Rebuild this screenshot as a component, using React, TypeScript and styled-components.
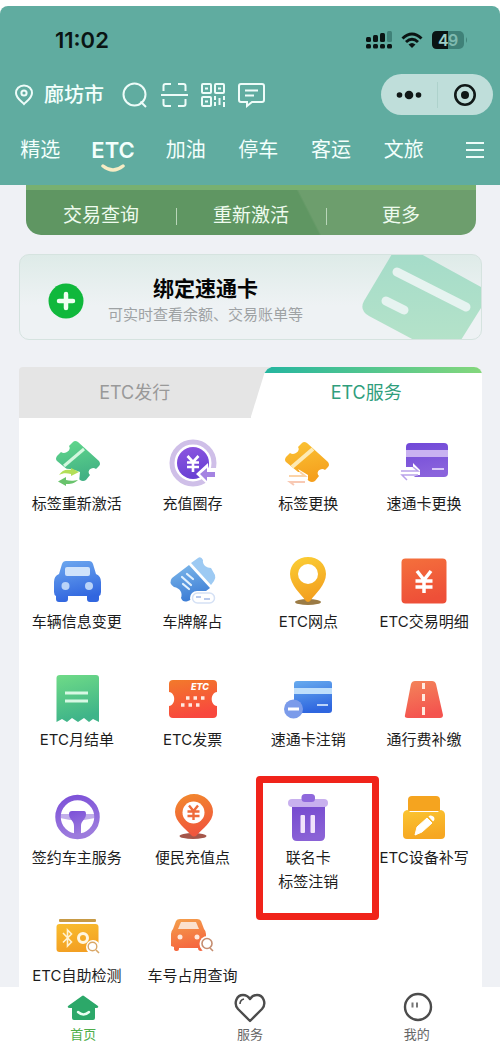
import React from "react";
import styled, { createGlobalStyle, css } from "styled-components";

const GlobalStyle = createGlobalStyle`
  *, *::before, *::after { box-sizing: border-box; }
  body {
    margin: 0;
    background: #ffffff;
    font-family: Inter, "Noto Sans CJK SC", sans-serif;
    color: #1c1c1c;
  }
  button { font: inherit; color: inherit; background: none; border: 0; padding: 0; margin: 0; cursor: pointer; }
  a { color: inherit; text-decoration: none; }
  h2, p { margin: 0; font-weight: 400; }
  svg { display: block; flex: none; }
`;

const Page = styled.div`
  display: flex;
  flex-direction: column;
  min-height: 100vh;
  padding-top: 6px;
`;

const Header = styled.header`
  background: #60aca0;
  border-radius: 8px 8px 0 0;
  color: #f3fffc;
`;

const StatusBar = styled.div`
  display: flex;
  align-items: center;
  justify-content: space-between;
  height: 68px;
  padding: 0 32px 0 55px;
  color: #0a1413;
`;

const Clock = styled.time`
  font-size: 22px;
  line-height: 24px;
  font-weight: 600;
`;

const StatusIcons = styled.div`
  display: flex;
  align-items: center;
  gap: 9px;
`;

const ToolRow = styled.div`
  display: flex;
  align-items: center;
  height: 41px;
  padding: 0 7px 0 14px;
`;

const CityButton = styled.button`
  display: flex;
  align-items: center;
  gap: 10px;
  margin-right: 18px;
  font-size: 20px;
  line-height: 24px;
  font-weight: 500;
`;

const Tools = styled.div`
  display: flex;
  align-items: center;
  gap: 13px;
`;

const Capsule = styled.div`
  display: flex;
  align-items: center;
  width: 112px;
  height: 41px;
  margin-left: auto;
  border-radius: 21px;
  background: #bfdeda;
`;

const CapsuleButton = styled.button`
  display: flex;
  flex: 1;
  align-items: center;
  justify-content: center;
  height: 26px;
  & + & { border-left: 1px solid #aed2cc; }
`;

const TopTabs = styled.nav`
  display: flex;
  align-items: center;
  height: 70px;
  padding: 0 16px 0 4px;
`;

const TopTab = styled.a<{ $active?: boolean }>`
  position: relative;
  display: flex;
  flex: 1;
  justify-content: center;
  font-size: 20px;
  line-height: 28px;
  ${(p) => p.$active && css`
    font-size: 22px;
    font-weight: 600;
  `}
`;

const TabSmile = styled.svg`
  position: absolute;
  top: 28px;
  left: 50%;
  margin-left: -13px;
`;

const MenuButton = styled.button`
  display: flex;
  justify-content: flex-end;
  width: 44px;
`;

const Content = styled.main`
  flex: 1;
  padding: 0 18px 0 19px;
  background: #eff1f5;
`;

const QuickBar = styled.div`
  display: flex;
  align-items: center;
  height: 50px;
  margin: 0 6px 0 7px;
  padding-top: 6px;
  border-top: 5px solid #78b070;
  border-radius: 0 0 15px 15px;
  background: linear-gradient(63deg, #5f9662 0 62%, #6d9e6d 62.5% 100%);
  color: #eefbee;
`;

const QuickLink = styled.a`
  flex: 1;
  position: relative;
  text-align: center;
  font-size: 19px;
  line-height: 24px;
  & + &::before {
    content: "";
    position: absolute;
    left: 0;
    top: 4px;
    height: 17px;
    border-left: 1px solid #b9d6b9;
  }
`;

const BindCard = styled.a`
  display: flex;
  align-items: center;
  height: 86px;
  margin-top: 19px;
  padding-left: 28px;
  overflow: hidden;
  border: 1px solid #d5e3df;
  border-radius: 10px;
  background: linear-gradient(#deebe8, #eef2f4 60%);
`;

const BindBody = styled.div`
  display: flex;
  flex: 1;
  align-items: center;
  padding-top: 8px;
`;

const BindText = styled.div`
  width: 203px;
  margin-left: 20px;
  text-align: center;
  white-space: nowrap;
`;

const BindTitle = styled.h2`
  font-size: 21px;
  line-height: 28px;
  font-weight: 700;
  color: #050505;
`;

const BindHint = styled.p`
  font-size: 15px;
  line-height: 24px;
  color: #9ea2a4;
`;

const PanelTabs = styled.div`
  display: flex;
  height: 51px;
  margin-top: 27px;
  border-radius: 4px 8px 0 0;
  background: #e5e5e5;
  overflow: hidden;
`;

const PanelTab = styled.button<{ $active?: boolean }>`
  flex: 1;
  font-size: 18px;
  line-height: 24px;
  color: #999999;
  ${(p) => p.$active && css`
    color: #2f9e7c;
    background: linear-gradient(90deg, #1fb3a2, #84d77c) top / 100% 6px no-repeat, #ffffff;
    clip-path: polygon(0 100%, 14px 6px, 17px 2px, 21px 0, 100% 0, 100% 100%);
  `}
`;

const ServiceGrid = styled.div`
  display: grid;
  grid-template-columns: repeat(4, 1fr);
  grid-auto-rows: 76px;
  row-gap: 42px;
  padding-top: 21px;
  background: #ffffff;
`;

const Service = styled.a<{ $marked?: boolean }>`
  position: relative;
  display: flex;
  flex-direction: column;
  align-items: center;
  gap: 5px;
  font-size: 15px;
  line-height: 24px;
  text-align: center;
  white-space: pre;
  ${(p) => p.$marked && css`
    z-index: 1;
    &::after {
      content: "";
      position: absolute;
      top: -17px;
      left: 5px;
      width: 123px;
      height: 144px;
      border: 7px solid #f0231a;
      border-radius: 4px;
    }
  `}
`;

const BottomNav = styled.nav`
  display: flex;
  height: 68px;
  padding-top: 5px;
  background: #ffffff;
`;

const NavItem = styled.a<{ $active?: boolean }>`
  display: flex;
  flex: 1;
  flex-direction: column;
  align-items: center;
  font-size: 13px;
  line-height: 20px;
  color: ${(p) => (p.$active ? "#4fae4a" : "#666666")};
`;

const Icon = ({ children }: { children: React.ReactNode }) => (
  <svg width="48" height="48" viewBox="0 0 48 48" fill="none" overflow="visible" aria-hidden="true">
    {children}
  </svg>
);

const Fade = ({ id, from, to }: { id: string; from: string; to: string }) => (
  <defs>
    <linearGradient id={id} x1="0" y1="0" x2="0.25" y2="1">
      <stop offset="0" stopColor={from} />
      <stop offset="1" stopColor={to} />
    </linearGradient>
  </defs>
);

const ticketPath =
  "M20 3Q22 1 25 3L46 22Q48 25 46 27L43 30C39 27 33 32 37 36L33 41Q30 43 27 41L4 22Q2 20 4 17L8 13C12 16 19 11 16 7Z";

const TicketActivate = () => (
  <Icon>
    <Fade id="ta" from="#62d98c" to="#42b184" />
    <path d={ticketPath} fill="url(#ta)" />
    <path d="M31 10L11 27" stroke="#d3f7de" strokeWidth="3" />
    <path d="M3 37C4 28 16 28 27 33L26 43L14 48H4Z" fill="#fff" />
    <path d="M6 36C9 31 13 30 18 31V29L26 33L18 37V35C13 34 10 34 6 36Z" fill="#b3df58" />
    <path d="M25 41C21 45 17 45 13 45V47L5 42.500L13 38V41C17 42 20 42 25 41Z" fill="#69c36c" />
  </Icon>
);

const TicketSwap = () => (
  <Icon>
    <Fade id="ts" from="#fbc435" to="#f5a01e" />
    <path d={ticketPath} fill="url(#ts)" transform="translate(-2 1)" />
    <path d="M29 10L8 28" stroke="#fdeab4" strokeWidth="4" />
    <path d="M2 33H16L14 30L24 36V40L20 47H2Z" fill="#fff" />
    <path d="M5 37H21L16 33" stroke="#fbd3a8" strokeWidth="2" />
    <path d="M21 43H6L10 46" stroke="#f8c9b4" strokeWidth="2" />
  </Icon>
);

const CoinLoad = () => (
  <Icon>
    <Fade id="cl" from="#8d55e0" to="#6a41d4" />
    <circle cx="24" cy="24" r="21" stroke="#cfbfe8" strokeWidth="5" />
    <circle cx="24" cy="24" r="16" fill="url(#cl)" />
    <path d="M18.500 17L24 23L29.500 17M24 23V33M18 23.500H30M18 28H30" stroke="#fff" strokeWidth="2.600" />
    <path d="M27 35L39 24V29H49V43H39V46Z" fill="#fff" />
    <path d="M31 35L38 29V33H46V38H38V42Z" fill="#a483e2" />
  </Icon>
);

const CardSwap = () => (
  <Icon>
    <Fade id="cs" from="#7048d8" to="#8a63dc" />
    <rect x="6" y="4" width="42" height="34" rx="4" fill="url(#cs)" />
    <rect x="6" y="11" width="42" height="7" fill="#c9b2f1" />
    <path d="M32 30H44" stroke="#d9c9f7" strokeWidth="2" />
    <path d="M0 28H13V24L20 31V36H17L12 39L5 38H0Z" fill="#fff" />
    <path d="M1 32H18L13 28M18 36H2L7 41" stroke="#b9a2ea" strokeWidth="1.500" />
  </Icon>
);

const CarBlue = () => (
  <Icon>
    <Fade id="cb" from="#6ea9ef" to="#3166df" />
    <path d="M13 4H36Q39 4 40 7L43 17Q48 19 48 25V35Q48 38 46 39V42Q46 45 43 45H37Q34 45 34 42V39H15V42Q15 45 12 45H6Q3 45 3 42V39Q1 38 1 35V25Q1 19 6 17L9 7Q10 4 13 4Z" fill="url(#cb)" />
    <rect x="12" y="10" width="25" height="9" rx="2" fill="#cfe3fb" />
    <circle cx="12.500" cy="29" r="4" fill="#b9d3f8" />
    <circle cx="36" cy="29" r="4" fill="#b9d3f8" />
  </Icon>
);

const PlateTicket = () => (
  <Icon>
    <Fade id="pt" from="#7db8ea" to="#3f7fd6" />
    <path d="M20 8L41 31L33 37Q28 37 26 41L19 44Q14 46 12 41C14 36 11 31 5 30Q-1 26 3 21Z" fill="url(#pt)" />
    <path d="M22 6L29 1Q32 -1 34 3C33 8 38 11 42 11L46 18Q47 21 45 24L42 28Z" fill="#9dcaf3" />
    <path d="M18 17L24 22M13 20L22 28M14 27L20 32" stroke="#e2f1fd" strokeWidth="2.200" strokeLinecap="round" />
    <rect x="21" y="34" width="27" height="14" rx="7" fill="#fff" />
    <rect x="23.500" y="36" width="22" height="10" rx="5" stroke="#d5e1f5" strokeWidth="1.500" />
    <path d="M27 40H32M35 42H41" stroke="#b8c9ec" strokeWidth="2" />
  </Icon>
);

const PinYellow = () => (
  <Icon>
    <Fade id="py" from="#fbcf35" to="#f3a01f" />
    <ellipse cx="24" cy="45" rx="13" ry="3" fill="#9b7b45" />
    <path d="M24 0C34 0 42 7 42 17C42 28 31 37 27 43Q24 47 21 43C17 37 6 28 6 17C6 7 14 0 24 0Z" fill="url(#py)" />
    <circle cx="24" cy="17" r="10" fill="#fff" />
  </Icon>
);

const YuanSquare = () => (
  <Icon>
    <Fade id="ys" from="#f4703c" to="#ee4f38" />
    <rect x="1.500" y="1.500" width="45" height="45" rx="4" fill="url(#ys)" />
    <path d="M17 14L24 23L31 14M24 23V36M15.500 24H32.500M15.500 30H32.500" stroke="#fff" strokeWidth="3.500" />
  </Icon>
);

const Receipt = () => (
  <Icon>
    <Fade id="rc" from="#6fdb87" to="#3fb489" />
    <path d="M7 0H43Q46 0 46 3V47L40 44L36 47L31 43L25 47L19 43L14 47L9 44L3.500 47V3Q3.500 0 7 0Z" fill="url(#rc)" />
    <path d="M12 18H35M12 26H35" stroke="#d8f8e4" strokeWidth="3" />
  </Icon>
);

const Invoice = () => (
  <Icon>
    <Fade id="iv" from="#f27a2b" to="#f8483e" />
    <path d="M4 5H44Q48 5 48 9V17C41 18 41 30 48 31V39Q48 43 44 43H4Q0 43 0 39V31C7 30 7 18 0 17V9Q0 5 4 5Z" fill="url(#iv)" />
    <text x="22" y="15" fontSize="9" fontWeight="800" fontStyle="italic" fill="#fff">ETC</text>
    <path d="M17 23H20.500M24.500 23H28M32 23H35.500M12 30H15.500M19.500 30H23M27 30H30.500" stroke="#ffe9df" strokeWidth="3.500" />
  </Icon>
);

const CardCancel = () => (
  <Icon>
    <Fade id="cc" from="#67abee" to="#2f66df" />
    <rect x="10" y="6" width="38" height="32" rx="3" fill="url(#cc)" />
    <rect x="10" y="13" width="38" height="6" fill="#bfdffb" />
    <path d="M33 30H44" stroke="#bcd4fa" strokeWidth="2" />
    <circle cx="9.500" cy="34" r="9.500" fill="#7b9bea" />
    <path d="M4 34H15" stroke="#fff" strokeWidth="3" />
  </Icon>
);

const Road = () => (
  <Icon>
    <Fade id="rd" from="#f3855a" to="#f4544f" />
    <path d="M15 6H32Q35 6 36 9L43 40Q43 43 40 43H8Q4 43 5 40L11 9Q12 6 15 6Z" fill="url(#rd)" />
    <path d="M23.500 8V14M23.500 19V26M23.500 32V40" stroke="#ffeadf" strokeWidth="3" />
  </Icon>
);

const Wheel = () => (
  <Icon>
    <Fade id="wh" from="#7c50d8" to="#9c7bdd" />
    <path d="M7 21H42V25L31 27H17L7 25Z" fill="#c2aeea" />
    <path d="M16 21Q16 18 19 18H31Q33 18 33 21C33 27 28 27 28 33V44H21V33C21 27 16 27 16 21Z" fill="url(#wh)" />
    <circle cx="24.500" cy="24" r="19.500" stroke="url(#wh)" strokeWidth="5.500" />
  </Icon>
);

const PinYuan = () => (
  <Icon>
    <Fade id="pn" from="#f28b2c" to="#f0563d" />
    <ellipse cx="24" cy="43" rx="13.500" ry="3" fill="#a5564a" />
    <path d="M25 1C35 1 44 9 44 19C44 29 33 36 28 42Q25 45 22 42C17 36 6 29 6 19C6 9 15 1 25 1Z" fill="url(#pn)" />
    <circle cx="24.500" cy="19.500" r="11" fill="#fff" />
    <path d="M20 12.500L24.500 18L29 12.500M24.500 18V27M18.500 18.500H30.500M18.500 23H30.500" stroke="#ee6c3b" strokeWidth="2.400" />
  </Icon>
);

const Trash = () => (
  <Icon>
    <Fade id="tr" from="#7549cf" to="#8a62d6" />
    <path d="M8 12H41V43Q41 48 36 48H13Q8 48 8 43Z" fill="url(#tr)" />
    <rect x="4" y="6" width="40" height="8" rx="4" fill="#c8b0ee" />
    <rect x="17.500" y="1" width="13.500" height="8" rx="3.500" fill="#8f68dc" />
    <rect x="16.500" y="22" width="4.500" height="18" rx="1" fill="#f1e3fb" />
    <rect x="26.500" y="22" width="4.500" height="18" rx="1" fill="#f1e3fb" />
  </Icon>
);

const DeviceWrite = () => (
  <Icon>
    <Fade id="dw" from="#fbc531" to="#f6a722" />
    <path d="M12 3H36Q40 3 40 7V18H8V7Q8 3 12 3Z" fill="#f5a41f" />
    <path d="M7 17Q9 17 10 19H38Q39 17 41 17Q45 18 45 22V42Q45 46 41 46H7Q3 46 3 42V22Q3 18 7 17Z" fill="url(#dw)" />
    <path d="M15 42L17 34L27 25L32 30L22 39Z" fill="#fff" stroke="#fff" strokeWidth="1" strokeLinejoin="round" />
    <path d="M28.500 23.500L30 22.500Q32 22 34 24Q35 26 34 27.500L33 28.500Z" fill="#fff" />
  </Icon>
);

const DeviceCheck = () => (
  <Icon>
    <Fade id="dc" from="#f9bd2e" to="#f3a023" />
    <rect x="6" y="8" width="37" height="3" rx="1" fill="#c79a45" />
    <rect x="3.500" y="13" width="42" height="28" rx="3" fill="url(#dc)" />
    <path d="M10 22L18.500 31L14.500 35V19L18.500 23L10 31.500" stroke="#fff2d2" strokeWidth="1.600" />
    <circle cx="30" cy="27" r="4.500" stroke="#fff6e0" strokeWidth="3" />
    <circle cx="40" cy="36" r="7" fill="#fff" />
    <circle cx="39.500" cy="35.500" r="4.300" stroke="#d9a767" strokeWidth="1.400" />
    <path d="M43 39L46 42" stroke="#d9a767" strokeWidth="1.600" />
  </Icon>
);

const CarSearch = () => (
  <Icon>
    <Fade id="cq" from="#f4a04c" to="#f5663f" />
    <path d="M11 8H28Q31 8 32 10L35 18Q37 20 37 23V36H34V38Q34 40 32 40Q29 40 29 37H10V38Q10 40 8 40Q5 40 5 38V36L2 35V23Q2 20 4 18L7 10Q8 8 11 8Z" fill="url(#cq)" />
    <path d="M12 11H27L30 18H9Z" fill="#fbe1cf" />
    <circle cx="11" cy="26" r="2.500" fill="#ffe8dc" />
    <circle cx="28" cy="26" r="2.500" fill="#ffe8dc" />
    <circle cx="38.500" cy="33" r="8" fill="#fff" />
    <circle cx="38" cy="32.500" r="5" stroke="#c58d70" strokeWidth="1.600" />
    <path d="M41 37L44 40" stroke="#c58d70" strokeWidth="1.600" />
  </Icon>
);

const services: { label: string; icon: React.ReactNode; marked?: boolean }[] = [
  { label: "标签重新激活", icon: <TicketActivate /> },
  { label: "充值圈存", icon: <CoinLoad /> },
  { label: "标签更换", icon: <TicketSwap /> },
  { label: "速通卡更换", icon: <CardSwap /> },
  { label: "车辆信息变更", icon: <CarBlue /> },
  { label: "车牌解占", icon: <PlateTicket /> },
  { label: "ETC网点", icon: <PinYellow /> },
  { label: "ETC交易明细", icon: <YuanSquare /> },
  { label: "ETC月结单", icon: <Receipt /> },
  { label: "ETC发票", icon: <Invoice /> },
  { label: "速通卡注销", icon: <CardCancel /> },
  { label: "通行费补缴", icon: <Road /> },
  { label: "签约车主服务", icon: <Wheel /> },
  { label: "便民充值点", icon: <PinYuan /> },
  { label: "联名卡\n标签注销", icon: <Trash />, marked: true },
  { label: "ETC设备补写", icon: <DeviceWrite /> },
  { label: "ETC自助检测", icon: <DeviceCheck /> },
  { label: "车号占用查询", icon: <CarSearch /> },
];

const Signal = () => (
  <svg width="26" height="18" viewBox="0 0 26 18" aria-hidden="true">
    <g fill="#0a1413">
      <rect x="0" y="6" width="5" height="5" rx="1.500" />
      <rect x="7" y="4" width="5" height="7" rx="1.500" />
      <rect x="14" y="2" width="5" height="9" rx="1.500" />
      <rect x="0" y="13" width="5" height="4.500" rx="1.500" />
      <rect x="7" y="13" width="5" height="4.500" rx="1.500" />
      <rect x="14" y="13" width="5" height="4.500" rx="1.500" />
      <rect x="21" y="13" width="5" height="4.500" rx="1.500" />
    </g>
    <rect x="21" y="0" width="5" height="11" rx="1.500" fill="#3f8178" />
  </svg>
);

const Wifi = () => (
  <svg width="22" height="17" viewBox="0 0 22 17" fill="none" aria-hidden="true">
    <path d="M1.500 6.500Q11 -2.500 20.500 6.500M5 10Q11 4.500 17 10" stroke="#0a1413" strokeWidth="3" />
    <path d="M7.500 12.500Q11 9.500 14.500 12.500L11 16Z" fill="#0a1413" />
  </svg>
);

const Battery = () => (
  <svg width="36" height="18" viewBox="0 0 36 18" aria-hidden="true">
    <rect width="32" height="18" rx="5" fill="#3f8178" />
    <path d="M5 0H16V18H5Q0 18 0 13V5Q0 0 5 0Z" fill="#0a1413" />
    <path d="M34 6Q36 9 34 12Z" fill="#3f8178" />
    <text x="6" y="14.500" fontSize="16" fontWeight="600" fill="#9fd0c7">4</text>
    <text x="16" y="14.500" fontSize="16" fontWeight="600" fill="#7fbab0">9</text>
  </svg>
);

const line = { fill: "none", stroke: "#eefcf9", strokeWidth: 2 } as const;

export default function App() {
  return (
    <>
      <GlobalStyle />
      <Page>
        <Header>
          <StatusBar>
            <Clock>11:02</Clock>
            <StatusIcons>
              <Signal />
              <Wifi />
              <Battery />
            </StatusIcons>
          </StatusBar>
          <ToolRow>
            <CityButton>
              <svg width="20" height="22" viewBox="0 0 20 22" {...line} aria-hidden="true">
                <path d="M10 1.500C5 1.500 2 5 2 9C2 14 7 17 10 20C13 17 18 14 18 9C18 5 15 1.500 10 1.500Z" />
                <circle cx="10" cy="9" r="2.600" />
              </svg>
              廊坊市
            </CityButton>
            <Tools>
              <button aria-label="搜索">
                <svg width="26" height="26" viewBox="0 0 26 26" {...line}>
                  <circle cx="12.500" cy="12.500" r="11" />
                  <path d="M18.500 19.500L24 25" />
                </svg>
              </button>
              <button aria-label="扫一扫">
                <svg width="27" height="26" viewBox="0 0 27 26" {...line}>
                  <path d="M2.500 9V4Q2.500 2 4.500 2H10M17 2H22.500Q24.500 2 24.500 4V9M24.500 17V22Q24.500 24 22.500 24H17M10 24H4.500Q2.500 24 2.500 22V17M0 13H27" />
                </svg>
              </button>
              <button aria-label="二维码">
                <svg width="24" height="24" viewBox="0 0 24 24" {...line}>
                  <rect x="1" y="1" width="9" height="9" rx="1" />
                  <rect x="14" y="1" width="9" height="9" rx="1" />
                  <rect x="1" y="14" width="9" height="9" rx="1" />
                  <path d="M4 5.500H7M17 5.500H20M4 18.500H7M14 13V17M14 19V23M18.500 15V22M23 13V17M23 19V24" />
                </svg>
              </button>
              <button aria-label="消息">
                <svg width="27" height="26" viewBox="0 0 27 26" {...line}>
                  <path d="M3 2H24Q26 2 26 4V18Q26 20 24 20H14L9 24V20H3Q1 20 1 18V4Q1 2 3 2ZM7 8.500H20M7 13.500H16" />
                </svg>
              </button>
            </Tools>
            <Capsule>
              <CapsuleButton aria-label="更多操作">
                <svg width="26" height="10" viewBox="0 0 26 10" fill="#101817">
                  <circle cx="3.500" cy="5" r="2.800" />
                  <circle cx="13" cy="5" r="4.300" />
                  <circle cx="22.500" cy="5" r="2.800" />
                </svg>
              </CapsuleButton>
              <CapsuleButton aria-label="关闭">
                <svg width="22" height="22" viewBox="0 0 22 22">
                  <circle cx="11" cy="11" r="9.700" fill="none" stroke="#101817" strokeWidth="2.600" />
                  <circle cx="11" cy="11" r="4" fill="#101817" />
                </svg>
              </CapsuleButton>
            </Capsule>
          </ToolRow>
          <TopTabs>
            <TopTab href="#">精选</TopTab>
            <TopTab href="#" $active>
              ETC
              <TabSmile width="26" height="10" viewBox="0 0 26 10" fill="none">
                <path d="M3 2Q13 10 23 2" stroke="#f7ecc4" strokeWidth="3.500" strokeLinecap="round" />
              </TabSmile>
            </TopTab>
            <TopTab href="#">加油</TopTab>
            <TopTab href="#">停车</TopTab>
            <TopTab href="#">客运</TopTab>
            <TopTab href="#">文旅</TopTab>
            <MenuButton aria-label="菜单">
              <svg width="18" height="18" viewBox="0 0 18 18" {...line}>
                <path d="M0 2H18M0 9H18M0 16H18" />
              </svg>
            </MenuButton>
          </TopTabs>
        </Header>

        <Content>
          <QuickBar>
            <QuickLink href="#">交易查询</QuickLink>
            <QuickLink href="#">重新激活</QuickLink>
            <QuickLink href="#">更多</QuickLink>
          </QuickBar>

          <BindCard href="#">
            <BindBody>
              <svg width="36" height="36" viewBox="0 0 36 36" aria-hidden="true">
                <circle cx="18" cy="18" r="17.500" fill="#10b83c" />
                <path d="M18 11V25M11 18H25" stroke="#f0fff2" strokeWidth="4.500" strokeLinecap="round" />
              </svg>
              <BindText>
                <BindTitle>绑定速通卡</BindTitle>
                <BindHint>可实时查看余额、交易账单等</BindHint>
              </BindText>
            </BindBody>
            <svg width="120" height="86" viewBox="0 0 120 86" fill="none" aria-hidden="true">
              <defs>
                <linearGradient id="bindCard" x1="0" y1="0" x2="0" y2="1">
                  <stop offset="0" stopColor="#a5dcc9" />
                  <stop offset="1" stopColor="#b4e2c9" />
                </linearGradient>
              </defs>
              <path d="M31 0H60L120 33V54L100 86H53L8 62Q-2 56 3 47Z" fill="url(#bindCard)" />
              <path d="M36 18L105 53M25 47L43 56" stroke="#e6f3f0" strokeWidth="9" strokeLinecap="round" />
            </svg>
          </BindCard>

          <PanelTabs role="tablist">
            <PanelTab role="tab" aria-selected={false}>ETC发行</PanelTab>
            <PanelTab role="tab" aria-selected $active>ETC服务</PanelTab>
          </PanelTabs>
          <ServiceGrid>
            {services.map((s) => (
              <Service key={s.label} href="#" $marked={s.marked}>
                {s.icon}
                <span>{s.label}</span>
              </Service>
            ))}
          </ServiceGrid>
        </Content>

        <BottomNav>
          <NavItem href="#" $active>
            <svg width="32" height="32" viewBox="0 0 32 32" fill="none" aria-hidden="true">
              <path d="M15 4Q16 3 17 4L31 14Q32 16 29 16H28V26Q28 28 26 28H7Q5 28 5 26V16H3Q0 16 1 14Z" fill="#2ca869" />
              <path d="M11 20Q16.500 25 22 20" stroke="#eafff2" strokeWidth="2.400" strokeLinecap="round" />
            </svg>
            首页
          </NavItem>
          <NavItem href="#">
            <svg width="32" height="32" viewBox="0 0 32 32" fill="none" stroke="#4c4c4c" strokeWidth="2.400" aria-hidden="true">
              <path d="M16 29L4 17C-1 11 3 3 9 3C12 3 14 4 16 7C18 4 20 3 23 3C29 3 33 11 28 17Z" strokeLinejoin="round" />
              <path d="M6 12Q6 8 10 7" strokeWidth="1.600" />
            </svg>
            服务
          </NavItem>
          <NavItem href="#">
            <svg width="32" height="32" viewBox="0 0 32 32" fill="none" stroke="#4c4c4c" aria-hidden="true">
              <circle cx="17" cy="15" r="13" strokeWidth="2.400" />
              <path d="M11.500 10.500V15.500M16 10.500V15.500" strokeWidth="2" stroke="#777777" />
            </svg>
            我的
          </NavItem>
        </BottomNav>
      </Page>
    </>
  );
}
